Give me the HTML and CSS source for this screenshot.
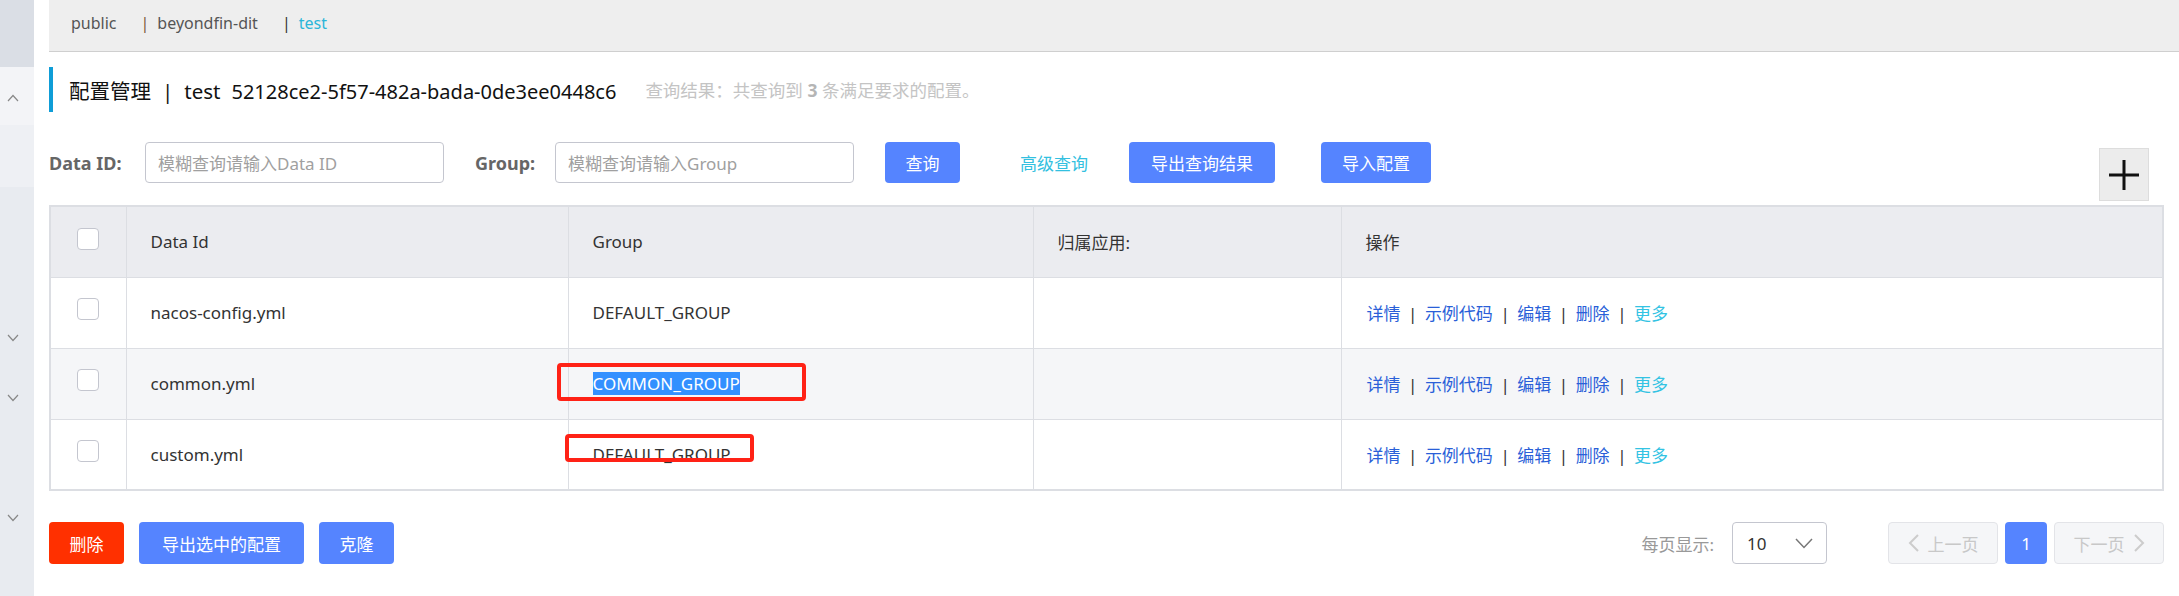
FILE: index.html
```html
<!DOCTYPE html>
<html lang="zh">
<head>
<meta charset="utf-8">
<title>配置管理</title>
<link rel="stylesheet" href="styles.css">
</head>
<body>
<div class="app">
  <aside class="sidebar">
    <div class="sb-block sb-head"></div>
    <div class="sb-block sb-open">
      <svg class="chev" width="12" height="8" viewBox="0 0 12 8"><polyline points="1,7 6,1.5 11,7" fill="none" stroke="#888" stroke-width="1.2"/></svg>
    </div>
    <div class="sb-block sb-sub"></div>
    <div class="sb-block sb-gap"></div>
    <div class="sb-block sb-group">
      <svg class="chev" width="12" height="8" viewBox="0 0 12 8"><polyline points="1,1 6,6.5 11,1" fill="none" stroke="#888" stroke-width="1.2"/></svg>
    </div>
    <div class="sb-block sb-group">
      <svg class="chev" width="12" height="8" viewBox="0 0 12 8"><polyline points="1,1 6,6.5 11,1" fill="none" stroke="#888" stroke-width="1.2"/></svg>
    </div>
    <div class="sb-block sb-group"></div>
    <div class="sb-block sb-group">
      <svg class="chev" width="12" height="8" viewBox="0 0 12 8"><polyline points="1,1 6,6.5 11,1" fill="none" stroke="#888" stroke-width="1.2"/></svg>
    </div>
  </aside>

  <main class="main">
    <nav class="crumbs">
      <span class="crumb">public</span>
      <span class="crumb-sep sep-a">|</span><span class="crumb">beyondfin-dit</span>
      <span class="crumb-sep">|</span><span class="crumb crumb-active">test</span>
    </nav>

    <div class="title-row">
      <span class="title">配置管理<span class="title-bar">|</span>test<span class="title-id">52128ce2-5f57-482a-bada-0de3ee0448c6</span></span>
      <span class="result">查询结果：共查询到 <b>3</b> 条满足要求的配置。</span>
    </div>

    <div class="filter-row">
      <span class="label label-data">Data ID:</span>
      <div class="input">模糊查询请输入Data ID</div>
      <span class="label label-group">Group:</span>
      <div class="input">模糊查询请输入Group</div>
      <button class="btn btn-query">查询</button>
      <a class="link-adv">高级查询</a>
      <button class="btn btn-export">导出查询结果</button>
      <button class="btn btn-import">导入配置</button>
    </div>

    <div class="table-wrap">
      <button class="add-btn" aria-label="add">
        <svg width="32" height="32" viewBox="0 0 32 32"><path d="M1 16H31M16 1V31" stroke="#111" stroke-width="3" fill="none"/></svg>
      </button>
      <table class="grid">
        <colgroup>
          <col class="c-check"><col class="c-id"><col class="c-group"><col class="c-app"><col>
        </colgroup>
        <thead>
          <tr>
            <th class="cell-check"><span class="checkbox"></span></th>
            <th>Data Id</th>
            <th>Group</th>
            <th>归属应用:</th>
            <th>操作</th>
          </tr>
        </thead>
        <tbody>
          <tr>
            <td class="cell-check"><span class="checkbox"></span></td>
            <td>nacos-config.yml</td>
            <td>DEFAULT_GROUP</td>
            <td></td>
            <td class="ops"><a>详情</a><span class="op-sep">|</span><a>示例代码</a><span class="op-sep">|</span><a>编辑</a><span class="op-sep">|</span><a>删除</a><span class="op-sep">|</span><a class="more">更多</a></td>
          </tr>
          <tr class="alt">
            <td class="cell-check"><span class="checkbox"></span></td>
            <td>common.yml</td>
            <td><span class="selected">COMMON_GROUP</span></td>
            <td></td>
            <td class="ops"><a>详情</a><span class="op-sep">|</span><a>示例代码</a><span class="op-sep">|</span><a>编辑</a><span class="op-sep">|</span><a>删除</a><span class="op-sep">|</span><a class="more">更多</a></td>
          </tr>
          <tr>
            <td class="cell-check"><span class="checkbox"></span></td>
            <td>custom.yml</td>
            <td>DEFAULT_GROUP</td>
            <td></td>
            <td class="ops"><a>详情</a><span class="op-sep">|</span><a>示例代码</a><span class="op-sep">|</span><a>编辑</a><span class="op-sep">|</span><a>删除</a><span class="op-sep">|</span><a class="more">更多</a></td>
          </tr>
        </tbody>
      </table>
      <div class="mark mark-1"></div>
      <div class="mark mark-2"></div>
    </div>

    <div class="footer-row">
      <div class="batch">
        <button class="btn btn-danger">删除</button>
        <button class="btn btn-export-sel">导出选中的配置</button>
        <button class="btn btn-clone">克隆</button>
      </div>
      <div class="pager">
        <span class="page-size-label">每页显示:</span>
        <div class="select">
          <span>10</span>
          <svg width="18" height="11" viewBox="0 0 18 11"><polyline points="1,1 9,9.5 17,1" fill="none" stroke="#777" stroke-width="1.5"/></svg>
        </div>
        <div class="pages">
          <span class="page-btn page-prev"><svg width="12" height="20" viewBox="0 0 12 20"><polyline points="10,2 2,10 10,18" fill="none" stroke="#ccc" stroke-width="2"/></svg>上一页</span>
          <span class="page-btn page-cur">1</span>
          <span class="page-btn page-next">下一页<svg width="12" height="20" viewBox="0 0 12 20"><polyline points="2,2 10,10 2,18" fill="none" stroke="#ccc" stroke-width="2"/></svg></span>
        </div>
      </div>
    </div>
  </main>
</div>
</body>
</html>
```
FILE: styles.css
```css
* { box-sizing: border-box; }
html, body { margin: 0; padding: 0; }
body {
  width: 2179px;
  height: 596px;
  overflow: hidden;
  background: #fff;
  font-family: "Noto Sans", "Noto Sans CJK SC", sans-serif;
  font-size: 17px;
  color: #333;
}
.app { display: flex; height: 596px; }

/* sidebar */
.sidebar {
  width: 34px;
  flex: none;
  background: #e8ebf0;
  display: flex;
  flex-direction: column;
}
.sb-block { display: flex; align-items: center; padding-left: 7px; }
.sb-head { height: 67px; background: #dadee5; }
.sb-open { height: 58px; background: #f3f4f7; padding-top: 4px; }
.sb-sub { height: 62px; background: #eef0f4; }
.sb-gap { height: 121px; }
.sb-group { height: 60px; }

/* main */
.main { flex: 1; min-width: 0; padding: 0 15px; }

.crumbs {
  height: 52px;
  margin-right: -15px;
  background: #eeeeee;
  border-bottom: 1px solid #cfcfcf;
  display: flex;
  align-items: center;
  padding: 0 0 5px 22px;
  font-size: 16px;
  color: #555;
}
.crumb-sep { margin: 0 8px 0 24px; color: #333; }
.sep-a { color: #7a5a3a; }
.crumb-active { color: #2bb6d9; }

.title-row {
  margin-top: 15px;
  height: 45px;
  border-left: 4px solid #0f9dd7;
  padding-left: 16px;
  display: flex;
  align-items: center;
}
.title { font-size: 20.5px; color: #111; }
.title-bar { margin: 0 11px; }
.title-id { margin-left: 11px; font-size: 20px; }
.result { margin-left: 29px; font-size: 17.5px; color: #c4c4c4; }
.result b { color: #b5b5b5; }

.filter-row {
  margin-top: 30px;
  height: 41px;
  display: flex;
  align-items: center;
}
.label { font-weight: 700; font-size: 18px; color: #666; }
.label-data { width: 96px; }
.label-group { width: 80px; margin-left: 31px; }
.input {
  width: 299px;
  height: 41px;
  border: 1px solid #c4c6cf;
  border-radius: 4px;
  padding-left: 12px;
  display: flex;
  align-items: center;
  color: #a0a0a0;
}
.btn {
  height: 41px;
  border: none;
  border-radius: 4px;
  background: #5584ff;
  color: #fff;
  font-family: inherit;
  font-size: 17px;
  padding: 0;
  display: inline-flex;
  align-items: center;
  justify-content: center;
}
.btn-query { width: 75px; margin-left: 31px; }
.link-adv { width: 109px; margin-left: 60px; color: #33c0e0; }
.btn-export { width: 146px; }
.btn-import { width: 110px; margin-left: 46px; }

/* table */
.table-wrap { margin-top: 22px; position: relative; }
.add-btn {
  position: absolute;
  top: -57px;
  right: 15px;
  width: 50px;
  height: 53px;
  background: #ececec;
  border: 1px solid #dddddd;
  padding: 0;
  display: flex;
  align-items: center;
  justify-content: center;
}
.grid {
  width: 100%;
  border-collapse: collapse;
  table-layout: fixed;
  border: 2px solid #dcdee3;
}
.c-check { width: 76px; }
.c-id { width: 442px; }
.c-group { width: 465px; }
.c-app { width: 308px; }
.grid th, .grid td {
  height: 71px;
  border: 1px solid #dcdee3;
  padding: 0 0 0 24px;
  text-align: left;
  font-weight: normal;
  color: #333;
  white-space: nowrap;
}
.grid thead tr { background: #ebecf0; }
.grid tr.alt { background: #f5f6f8; }
.grid .cell-check { padding: 0; text-align: center; }
.checkbox {
  display: inline-block;
  width: 22px;
  height: 22px;
  border: 1px solid #c4c6cf;
  border-radius: 4px;
  background: #fff;
  vertical-align: middle;
  margin-top: -10px;
}
.grid td.ops { padding-left: 25px; }
.ops a { color: #2a5fd8; }
.ops a.more { color: #33c3e3; }
.op-sep { margin: 0 7.5px; color: #333; }
.selected { background: #3390ff; color: #fff; }

.mark {
  position: absolute;
  border: 4px solid #ff2216;
  border-radius: 4px;
}
.mark-1 { left: 508px; top: 158px; width: 249px; height: 38px; }
.mark-2 { left: 516px; top: 229px; width: 189px; height: 28px; }

/* footer */
.footer-row {
  margin-top: 31px;
  height: 42px;
  display: flex;
  justify-content: space-between;
  align-items: center;
}
.batch { display: flex; gap: 15px; }
.btn-danger { width: 75px; height: 42px; background: #ff3000; }
.btn-export-sel { width: 165px; height: 42px; }
.btn-clone { width: 75px; height: 42px; }

.pager { display: flex; align-items: center; }
.page-size-label { color: #999; }
.select {
  margin-left: 18px;
  width: 95px;
  height: 42px;
  border: 1px solid #c4c6cf;
  border-radius: 4px;
  display: flex;
  align-items: center;
  justify-content: space-between;
  padding: 0 13px 0 14px;
  color: #333;
}
.pages { display: flex; gap: 7px; margin-left: 61px; }
.page-btn {
  height: 42px;
  border-radius: 4px;
  display: flex;
  align-items: center;
  justify-content: center;
  gap: 8px;
  color: #c8c8c8;
}
.page-prev, .page-next {
  width: 110px;
  background: #f5f6f8;
  border: 1px solid #e3e4e8;
}
.page-cur { width: 42px; background: #5584ff; color: #fff; }
```
